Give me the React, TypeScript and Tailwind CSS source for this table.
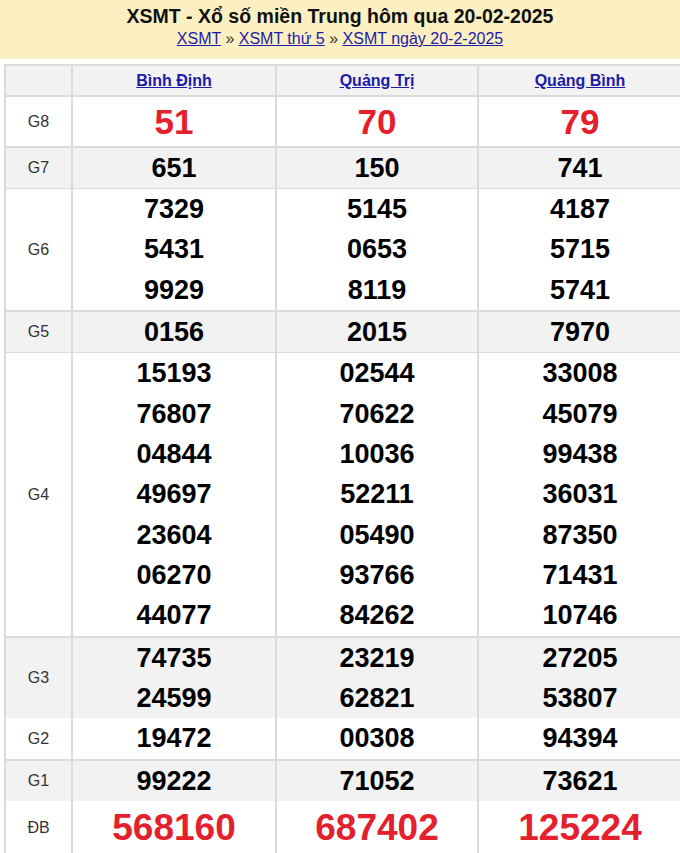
import React from "react";

type Row = {
  label: string;
  h: number;
  grey: boolean;
  kind: "g8" | "normal" | "db";
  vals: string[][];
};

const rows: Row[] = [
  { label: "G8", h: 51, grey: false, kind: "g8", vals: [["51"], ["70"], ["79"]] },
  { label: "G7", h: 41, grey: true, kind: "normal", vals: [["651"], ["150"], ["741"]] },
  {
    label: "G6",
    h: 123,
    grey: false,
    kind: "normal",
    vals: [
      ["7329", "5431", "9929"],
      ["5145", "0653", "8119"],
      ["4187", "5715", "5741"],
    ],
  },
  { label: "G5", h: 41, grey: true, kind: "normal", vals: [["0156"], ["2015"], ["7970"]] },
  {
    label: "G4",
    h: 285,
    grey: false,
    kind: "normal",
    vals: [
      ["15193", "76807", "04844", "49697", "23604", "06270", "44077"],
      ["02544", "70622", "10036", "52211", "05490", "93766", "84262"],
      ["33008", "45079", "99438", "36031", "87350", "71431", "10746"],
    ],
  },
  {
    label: "G3",
    h: 80,
    grey: true,
    kind: "normal",
    vals: [
      ["74735", "24599"],
      ["23219", "62821"],
      ["27205", "53807"],
    ],
  },
  { label: "G2", h: 43, grey: false, kind: "normal", vals: [["19472"], ["00308"], ["94394"]] },
  { label: "G1", h: 40, grey: true, kind: "normal", vals: [["99222"], ["71052"], ["73621"]] },
  { label: "ĐB", h: 56, grey: false, kind: "db", vals: [["568160"], ["687402"], ["125224"]] },
];

const font = { fontFamily: '"Liberation Sans", Arial, sans-serif' };

function Cell({ children, grey, className = "" }: { children: React.ReactNode; grey: boolean; className?: string }) {
  return (
    <div
      className={
        "border-r-2 border-b-2 border-[#dedbd7] flex flex-col items-center justify-center " +
        (grey ? "bg-[#f2f2f2] " : "bg-white ") +
        className
      }
    >
      {children}
    </div>
  );
}

export default function App() {
  const provinces = ["Bình Định", "Quảng Trị", "Quảng Bình"];
  return (
    <div className="w-[680px] h-[853px] overflow-hidden bg-white" style={font}>
      <div className="h-[59px] bg-[#fcf0c2] flex flex-col items-center pt-[5px]">
        <div className="text-[19.5px] font-bold leading-[22px] text-[#111]">
          XSMT - Xổ số miền Trung hôm qua 20-02-2025
        </div>
        <div className="text-[16px] leading-[20px] mt-[2px] text-[#333]">
          <a href="#" className="text-[#1c1ca8] underline">XSMT</a>
          <span> » </span>
          <a href="#" className="text-[#1c1ca8] underline">XSMT thứ 5</a>
          <span> » </span>
          <a href="#" className="text-[#1c1ca8] underline">XSMT ngày 20-2-2025</a>
        </div>
      </div>
      <div className="mt-[5px] ml-[4px] w-[679px] border-t-2 border-l-2 border-[#dedbd7]">
        <div className="grid grid-cols-[67px_204px_202px_204px] h-[31px]">
          <Cell grey={true}>{""}</Cell>
          {provinces.map((p) => (
            <Cell grey={true} key={p}>
              <a href="#" className="text-[16px] font-bold text-[#1c1ca8] underline leading-none">
                {p}
              </a>
            </Cell>
          ))}
        </div>
        {rows.map((r) => (
          <div key={r.label} className="grid grid-cols-[67px_204px_202px_204px]" style={{ height: r.h }}>
            <Cell grey={r.grey}>
              <span className="text-[16px] text-[#333]">{r.label}</span>
            </Cell>
            {r.vals.map((col, i) => (
              <Cell grey={r.grey} key={i}>
                {col.map((v, j) =>
                  r.kind === "g8" ? (
                    <span key={j} className="text-[35px] font-bold text-[#e3202c] leading-[40px]">
                      {v}
                    </span>
                  ) : r.kind === "db" ? (
                    <span key={j} className="text-[37px] font-bold text-[#e3202c] leading-[44px]">
                      {v}
                    </span>
                  ) : (
                    <span key={j} className="text-[27px] font-bold text-black leading-[40.3px]">
                      {v}
                    </span>
                  )
                )}
              </Cell>
            ))}
          </div>
        ))}
      </div>
    </div>
  );
}
